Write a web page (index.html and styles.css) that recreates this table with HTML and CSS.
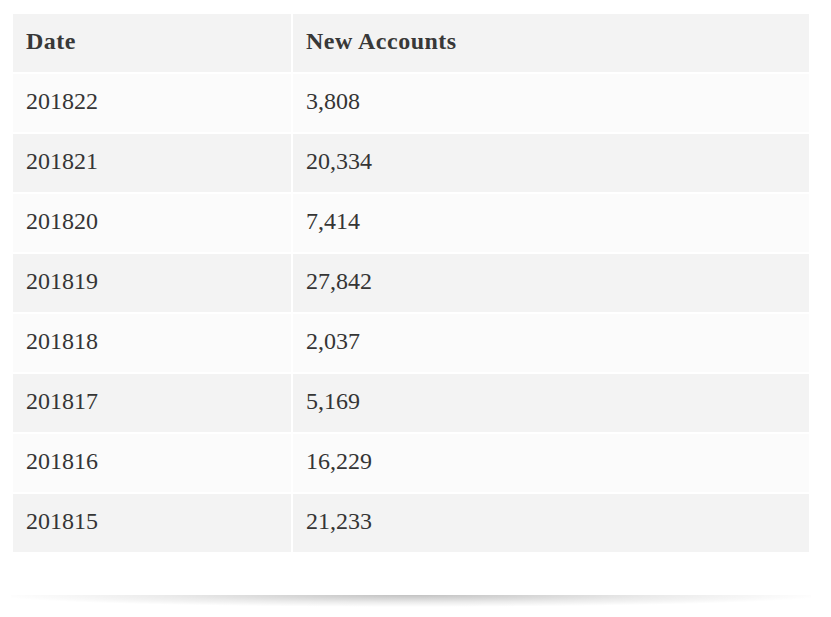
FILE: index.html
```html
<!DOCTYPE html>
<html>
<head>
<meta charset="utf-8">
<link rel="stylesheet" href="styles.css">
</head>
<body>
<div class="wrap">
  <div class="card">
    <table class="data">
      <thead>
        <tr><th class="col-date">Date</th><th>New Accounts</th></tr>
      </thead>
      <tbody>
        <tr><td>201822</td><td>3,808</td></tr>
        <tr><td>201821</td><td>20,334</td></tr>
        <tr><td>201820</td><td>7,414</td></tr>
        <tr><td>201819</td><td>27,842</td></tr>
        <tr><td>201818</td><td>2,037</td></tr>
        <tr><td>201817</td><td>5,169</td></tr>
        <tr><td>201816</td><td>16,229</td></tr>
        <tr><td>201815</td><td>21,233</td></tr>
      </tbody>
    </table>
  </div>
  <div class="shadow"></div>
</div>
</body>
</html>
```
FILE: styles.css
```css
html, body {
  margin: 0;
  padding: 0;
  background: #ffffff;
}
.wrap {
  padding: 12px 0 0 11px;
  width: 800px;
}
.card {
  background: #ffffff;
  padding-bottom: 41px;
}
.data {
  border-collapse: separate;
  border-spacing: 2px;
  width: 800px;
  font-family: "Liberation Serif", "Times New Roman", serif;
  font-size: 24px;
  color: #353535;
}
.data th,
.data td {
  text-align: left;
  padding: 0 13px 4px 13px;
  line-height: 54px;
  white-space: nowrap;
}
.data th {
  font-weight: 700;
  letter-spacing: 0.5px;
  color: #383838;
  background: #f3f3f3;
}
.data .col-date {
  width: 252px;
}
.data tbody tr:nth-child(odd) td {
  background: #fbfbfb;
}
.data tbody tr:nth-child(even) td {
  background: #f3f3f3;
}
.shadow {
  height: 12px;
  width: 800px;
  background: radial-gradient(ellipse 52% 100% at 50% 0%, rgba(0,0,0,0.24), rgba(0,0,0,0.08) 60%, rgba(0,0,0,0) 100%);
}
```
